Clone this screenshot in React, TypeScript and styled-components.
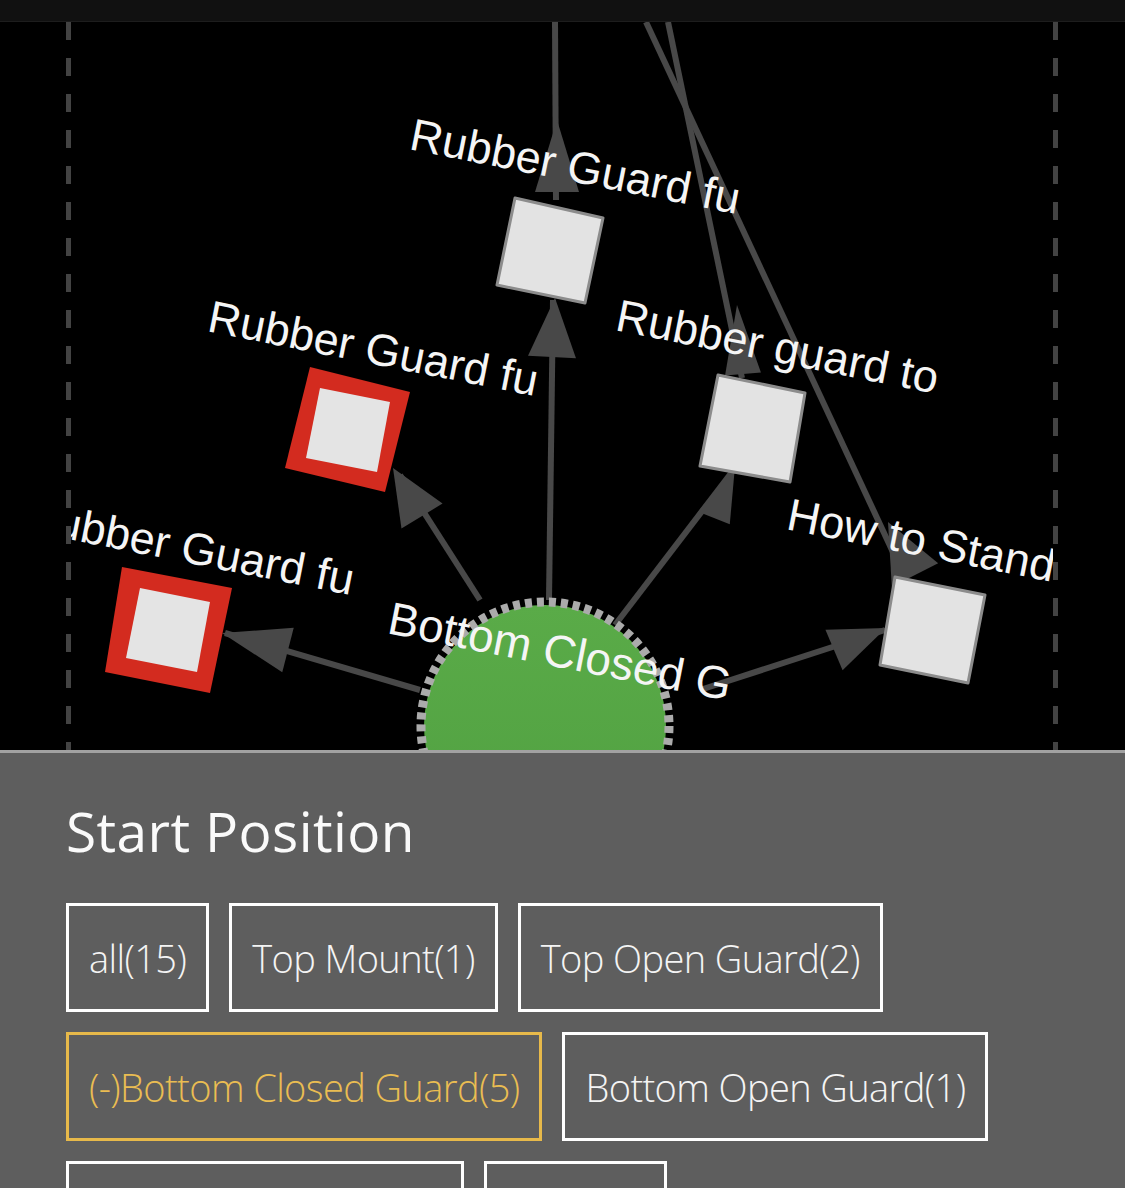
import styled, { createGlobalStyle } from 'styled-components';

const GlobalStyle = createGlobalStyle`
  html, body {
    margin: 0;
    padding: 0;
    background: #5e5e5e;
  }
  body {
    font-family: "Open Sans", "Liberation Sans", sans-serif;
  }
`;

const Page = styled.div`
  width: 1125px;
  display: flex;
  flex-direction: column;
`;

const TopBar = styled.div`
  height: 22px;
  box-sizing: border-box;
  background: #111;
  border-bottom: 1px solid #1d1d1d;
`;

const Canvas = styled.div`
  height: 728px;
  background: #000;
  padding: 0 67px 0 66px;
  display: flex;
`;

const dash = 'repeating-linear-gradient(to bottom, #434343 0 18px, transparent 18px 36px)';

const Stage = styled.div`
  flex: 1;
  padding: 0 5px;
  background: ${dash} left top / 5px 100% no-repeat, ${dash} right top / 5px 100% no-repeat;
`;

const Graph = styled.svg`
  display: block;
  width: 982px;
  height: 728px;
`;

const Panel = styled.section`
  border-top: 3px solid #a2a2a2;
  background: #5e5e5e;
  padding: 0 66px;
  display: flex;
  flex-direction: column;
`;

const Title = styled.h2`
  margin: 50px 0 45px;
  font-size: 55px;
  line-height: 55px;
  font-weight: 400;
  color: #fafafa;
  letter-spacing: 0.4px;
`;

const Filters = styled.div`
  display: flex;
  flex-wrap: wrap;
  gap: 20px;
`;

const Filter = styled.button<{ $active?: boolean }>`
  height: 109px;
  box-sizing: border-box;
  padding: 0 20px;
  background: transparent;
  border: 3px solid ${({ $active }) => ($active ? '#e7b94a' : '#fff')};
  color: ${({ $active }) => ($active ? '#eabd52' : '#f4f4f4')};
  font-family: "Open Sans", "Liberation Sans", sans-serif;
  font-size: 38px;
  font-weight: 300;
  letter-spacing: -0.6px;
  display: flex;
  align-items: center;
`;

type Pt = [number, number];

const EDGE = '#484848';

const arrow = (tip: Pt, base: Pt, hw: number) => {
  const dx = base[0] - tip[0];
  const dy = base[1] - tip[1];
  const len = Math.hypot(dx, dy);
  const px = (-dy / len) * hw;
  const py = (dx / len) * hw;
  return `${tip[0]},${tip[1]} ${base[0] + px},${base[1] + py} ${base[0] - px},${base[1] - py}`;
};

const edges: { from: Pt; to: Pt; tip: Pt; base: Pt; hw: number }[] = [
  { from: [549, 600], to: [553, 300], tip: [555, 298], base: [552, 357], hw: 24 },
  { from: [555, 22], to: [556, 200], tip: [557, 120], base: [557, 192], hw: 22 },
  { from: [480, 600], to: [400, 475], tip: [393, 468], base: [422, 516], hw: 24 },
  { from: [420, 690], to: [225, 633], tip: [222, 633], base: [288, 650], hw: 23 },
  { from: [615, 625], to: [735, 468], tip: [735, 466], base: [714, 518], hw: 17 },
  { from: [700, 690], to: [885, 630], tip: [886, 628], base: [834, 650], hw: 22 },
  { from: [668, 22], to: [742, 378], tip: [737, 305], base: [743, 374], hw: 18 },
  { from: [646, 22], to: [905, 578], tip: [888, 522], base: [915, 575], hw: 26 },
];

const pts = (p: Pt[]) => p.map((q) => q.join(',')).join(' ');

const plainNodes: Pt[][] = [
  [[515, 198], [603, 218], [585, 303], [497, 285]],
  [[718, 375], [805, 393], [790, 482], [700, 466]],
  [[895, 577], [985, 595], [968, 683], [880, 665]],
];

const redNodes: { outer: Pt[]; inner: Pt[] }[] = [
  {
    outer: [[310, 367], [410, 392], [385, 492], [285, 468]],
    inner: [[320, 388], [390, 402], [377, 472], [306, 458]],
  },
  {
    outer: [[122, 567], [232, 588], [210, 693], [105, 672]],
    inner: [[140, 588], [210, 602], [197, 672], [126, 658]],
  },
];

const labels: { text: string; x: number; y: number; size: number }[] = [
  { text: 'Rubber Guard fu', x: 408, y: 149, size: 45 },
  { text: 'Rubber Guard fu', x: 206, y: 331, size: 45 },
  { text: 'Rubber Guard fu', x: 22, y: 530, size: 45 },
  { text: 'Rubber guard to', x: 614, y: 330, size: 45.3 },
  { text: 'How to Stand up', x: 785, y: 529, size: 45.3 },
  { text: 'Bottom Closed G', x: 386, y: 633, size: 45.8 },
];

const filters = [
  { label: 'all(15)' },
  { label: 'Top Mount(1)' },
  { label: 'Top Open Guard(2)' },
  { label: '(-)Bottom Closed Guard(5)', active: true },
  { label: 'Bottom Open Guard(1)' },
  { label: 'Bottom Half Guard(4)' },
  { label: 'Turtle(2)' },
];

const App = () => {
  return (
    <Page>
      <GlobalStyle />
      <TopBar />
      <Canvas>
        <Stage>
          <Graph viewBox="71 22 982 728">
            <defs>
              <linearGradient id="green" x1="0" y1="0" x2="0" y2="1">
                <stop offset="0" stopColor="#5aab48" />
                <stop offset="0.75" stopColor="#53a343" />
                <stop offset="1" stopColor="#3d7d33" />
              </linearGradient>
            </defs>

            {edges.map((e, i) => (
              <g key={i}>
                <line x1={e.from[0]} y1={e.from[1]} x2={e.to[0]} y2={e.to[1]} stroke={EDGE} strokeWidth={6} />
                <polygon points={arrow(e.tip, e.base, e.hw)} fill={EDGE} />
              </g>
            ))}

            <circle cx={545} cy={726} r={121} fill="url(#green)" />
            <circle cx={545} cy={726} r={124} fill="none" stroke="#ababab" strokeWidth={9} strokeDasharray="7 5" />

            {plainNodes.map((n, i) => (
              <polygon key={i} points={pts(n)} fill="#e3e3e3" stroke="#8c8c8c" strokeWidth={3} strokeLinejoin="round" />
            ))}
            {redNodes.map((n, i) => (
              <g key={i}>
                <polygon points={pts(n.outer)} fill="#d32b1f" />
                <polygon points={pts(n.inner)} fill="#e4e4e4" />
              </g>
            ))}

            {labels.map((l, i) => (
              <text
                key={i}
                transform={`translate(${l.x} ${l.y}) rotate(11.2)`}
                fill="#f5f5f5"
                fontFamily='"Liberation Sans", Arial, sans-serif'
                fontSize={l.size}
              >
                {l.text}
              </text>
            ))}
          </Graph>
        </Stage>
      </Canvas>
      <Panel>
        <Title>Start Position</Title>
        <Filters>
          {filters.map((f) => (
            <Filter key={f.label} $active={f.active}>
              {f.label}
            </Filter>
          ))}
        </Filters>
      </Panel>
    </Page>
  );
};

export default App;
